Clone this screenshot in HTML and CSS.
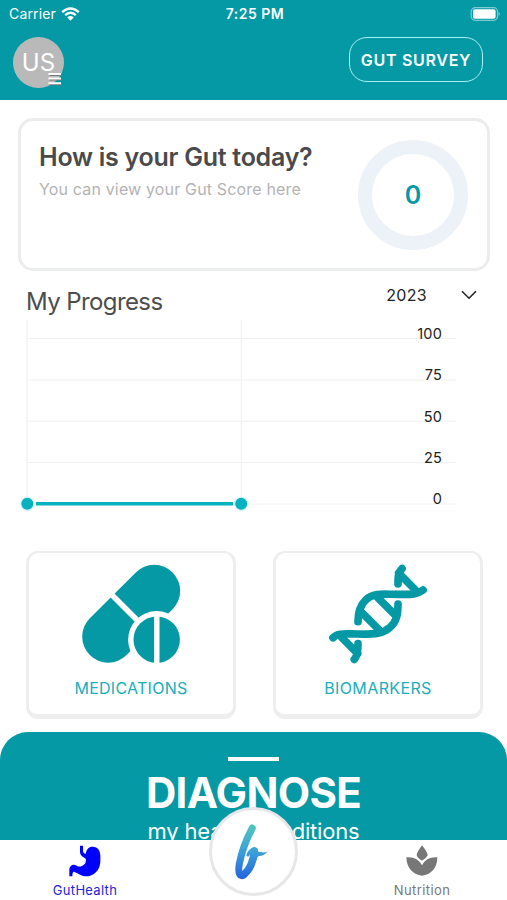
FILE: index.html
```html
<!DOCTYPE html>
<html lang="en">
<head>
<meta charset="utf-8">
<title>Gut Health</title>
<link rel="stylesheet" href="styles.css">
</head>
<body>
<div class="app">
  <header class="header">
    <div class="status">
      <div class="carrier"><span>Carrier</span>
        <svg width="19" height="14" viewBox="0 0 19 14" fill="none" stroke="#fff"><path d="M1.2 5.2Q9.5-2.2 17.8 5.2M4.2 8.2Q9.5 3.4 14.8 8.2" stroke-width="2.4"/><path d="M6.2 10.4Q9.5 7.6 12.8 10.4L9.5 13.8Z" fill="#fff" stroke="none"/></svg>
      </div>
      <div class="time">7:25 PM</div>
      <svg class="battery" width="31" height="14" viewBox="0 0 31 14"><rect x="1.2" y=".7" width="26.4" height="12.6" rx="4" fill="none" stroke="#7fcbd1" stroke-width="1.2"/><rect x="3" y="2.3" width="22.6" height="9.4" rx="2" fill="#fff"/><path d="M28.7 4.7Q31 7 28.7 9.3Z" fill="#7fcbd1"/></svg>
    </div>
    <div class="toolbar">
      <div class="avatar">US
        <svg class="menu" width="14" height="14" viewBox="0 0 14 14"><path d="M1.5 3H14M1.5 7.5H14M1.5 12.3H14" stroke="#777" stroke-width="2"/><path d="M.5 2H13M.5 6.5H13M.5 11.3H13" stroke="#fff" stroke-width="2"/></svg>
      </div>
      <button class="survey">GUT SURVEY</button>
    </div>
  </header>
  <main class="content">
    <section class="score">
      <div><h1>How is your Gut today?</h1><p>You can view your Gut Score here</p></div>
      <div class="ring">0</div>
    </section>
    <section class="progress">
      <div class="progress-head">
        <h2>My Progress</h2>
        <div class="year">2023<svg width="16" height="10" viewBox="0 0 16 10"><path d="M1 1.2 8 8.2 15 1.2" fill="none" stroke="#222" stroke-width="1.6"/></svg></div>
      </div>
      <svg class="chart" width="507" height="194" viewBox="0 320 507 194">
        <path d="M27 338.5H456M27 379.9H456M27 421.2H456M27 462.6H456M27 504H456" stroke="#f0f0f1"/>
        <path d="M27 320V504M241.4 320V504" stroke="#f1f1f2" stroke-width="1.3"/>
        <path d="M36 503.8H233" stroke="#06b2bf" stroke-width="3.4"/>
        <g fill="#06b2bf" stroke="#d9f6f8" stroke-width="1.2"><circle cx="27.3" cy="503.8" r="6.6"/><circle cx="241.2" cy="503.8" r="6.6"/></g>
        <g class="axis"><text x="442" y="339">100</text><text x="442" y="380.3">75</text><text x="442" y="421.6">50</text><text x="442" y="462.9">25</text><text x="442" y="504.2">0</text></g>
      </svg>
    </section>
    <section class="tiles">
      <div class="tile">
        <svg width="100" height="100" viewBox="81 564 100 100">
          <path d="M108.2 636.7 154.2 590.8" stroke="#0499a5" stroke-width="52" stroke-linecap="round"/>
          <path d="M110 593 139 622" stroke="#fff" stroke-width="5.4"/>
          <circle cx="156.7" cy="639.7" r="28.6" fill="#fff"/>
          <circle cx="156.7" cy="639.7" r="23.2" fill="#0499a5"/>
          <path d="M156.8 614V665" stroke="#fff" stroke-width="5.4"/>
        </svg><span class="medications">MEDICATIONS</span>
      </div>
      <div class="tile">
        <svg width="100" height="100" viewBox="202 71 300 300" fill="none" stroke="#0499a5" stroke-width="23" stroke-linecap="round" stroke-linejoin="round">
          <path d="M217 292C232 277 252 281 290 281C345 282 367 280 388 261C408 244 412 222 412 191"/>
          <path d="M292 244C292 216 298 195 315 179C337 157 361 162 412 162C448 162 468 164 487 149"/>
          <path d="M424 85C413 95 412 109 412 131M281 357C291 346 292 331 292 310"/>
          <path d="M414 98 466 151M240 288 291 340M350 171 404 225M304 217 358 271" stroke-width="23"/>
        </svg><span class="biomarkers">BIOMARKERS</span>
      </div>
    </section>
  </main>
  <section class="diagnose">
    <div class="handle"></div>
    <h2>DIAGNOSE</h2>
    <p>my health conditions</p>
  </section>
  <nav class="tabs">
    <div class="tab active">
      <svg width="32" height="32" viewBox="207 361 96 96"><path d="M240 363H249V379Q249 386 257 388C259 371 270 363 284 367C302 372 302 391 301 411C300 437 281 455 258 455C243 455 230 443 222 441Q217 440 217 455H208V435C208 424 219 416 230 423C240 430 257 423 258 407C259 396 240 399 240 381Z" fill="#00f"/></svg>
      <span>GutHealth</span>
    </div>
    <div class="logo">
      <svg width="110" height="105" viewBox="0 0 110 105">
        <defs><linearGradient id="ink" x1="0" y1="29" x2="0" y2="84" gradientUnits="userSpaceOnUse"><stop stop-color="#51c8bd"/><stop offset=".5" stop-color="#3aa0d8"/><stop offset="1" stop-color="#2664dc"/></linearGradient></defs>
        <g fill="none" stroke="url(#ink)" stroke-linecap="round" stroke-linejoin="round"><path d="M52.3 33C47.5 42 41.5 57 39.3 69C37.5 79.5 40.5 82 44 80" stroke-width="7"/><path d="M43.5 79.5C50 75 53.8 65 54.3 56" stroke-width="7.6"/><path d="M48 60C49 56.5 52.5 53.3 55 54.3" stroke-width="3"/></g>
        <path d="M54 52C58 53 56 57 60 57Q64 58 67.5 56.5Q64 61 59 61L56 63Z" fill="url(#ink)"/>
      </svg>
    </div>
    <div class="tab">
      <svg width="32" height="32" viewBox="457 362 96 96"><path d="M505 363C515 376 522 386 522 393Q519 401 505 409Q491 401 489 393C489 386 496 376 505 363ZM458 399C480 397 496 405 505 423C514 405 530 397 551 399C551 433 531 451 505 454C479 451 459 433 458 399Z" fill="#777"/></svg>
      <span class="nutrition">Nutrition</span>
    </div>
  </nav>
</div>
</body>
</html>
```
FILE: styles.css
```css
* { box-sizing: border-box; margin: 0; }
body { background: #fff; font-family: Inter, "Liberation Sans", sans-serif; }
.app { width: 507px; height: 900px; display: flex; flex-direction: column; overflow: hidden; }
.header { height: 100px; flex: none; background: #0499a5; color: #fff; }
.status { height: 27px; padding: 0 6px 0 9px; display: grid; grid-template-columns: 1fr auto 1fr; align-items: center; font-size: 14px; }
.carrier { display: flex; align-items: center; gap: 5px; letter-spacing: .15px; }
.time { font-weight: 600; letter-spacing: .5px; }
.battery { justify-self: end; }
.toolbar { display: flex; justify-content: space-between; align-items: flex-start; padding: 10px 24px 0 13px; }
.avatar { position: relative; width: 51px; height: 51px; border-radius: 50%; background: #b9b9b9; font-size: 24px; font-weight: 400; line-height: 51px; text-align: center; }
.menu { position: absolute; left: 35px; top: 35px; }
.survey { width: 134px; height: 45px; padding: 0; border: 1.5px solid #a8f0f4; border-radius: 18px; background: none; color: #fff; font: 600 16px Inter, sans-serif; letter-spacing: .7px; }
.content { height: 632px; flex: none; padding-top: 18px; }
.score { width: 472px; height: 153px; margin-left: 18px; padding: 19px 19px 0 18px; display: flex; justify-content: space-between; border: 3px solid #ebecec; border-radius: 15px; }
.score h1 { padding-top: 2px; font-size: 25px; line-height: 30px; font-weight: 600; letter-spacing: -.26px; color: #4a4a4a; white-space: nowrap; }
.score p { margin-top: 7px; font-size: 16px; line-height: 20px; letter-spacing: .16px; color: #b3b3b3; white-space: nowrap; }
.ring { width: 110px; height: 110px; border: 14px solid #edf2f8; border-radius: 50%; line-height: 82px; text-align: center; font-size: 25px; font-weight: 600; color: #0499a5; }
.progress-head { height: 49px; display: flex; justify-content: space-between; padding: 0 30px 0 26px; }
.progress h2 { padding-top: 16px; font-size: 24px; line-height: 30px; font-weight: 400; letter-spacing: -.6px; color: #4d4d4d; }
.year { display: flex; align-items: center; gap: 34px; height: 48px; font-size: 16px; letter-spacing: .3px; color: #222; }
.chart { display: block; }
.axis { font-size: 14.5px; letter-spacing: .2px; fill: #222; text-anchor: end; }
.tiles { display: flex; gap: 37px; padding: 37px 0 0 26px; }
.tile { width: 210px; height: 168px; padding-top: 11px; display: flex; flex-direction: column; align-items: center; border: 2px solid #eee; border-width: 2px 3px 5px; border-radius: 12px; color: #18aebb; font-size: 16px; }
.tile span { margin-top: 14px; line-height: 20px; }
.medications { letter-spacing: .27px; }
.biomarkers { letter-spacing: .38px; }
.diagnose { height: 108px; flex: none; background: #0499a5; border-radius: 28px 28px 0 0; padding-top: 25px; overflow: hidden; display: flex; flex-direction: column; align-items: center; color: #fff; white-space: nowrap; }
.handle { width: 51px; height: 4px; background: #fff; flex: none; }
.diagnose h2 { margin-top: 9px; font-size: 42px; line-height: 46px; font-weight: 650; letter-spacing: -.7px; }
.diagnose p { margin-top: 2px; font-size: 22px; line-height: 26px; letter-spacing: -.2px; }
.tabs { position: relative; height: 60px; flex: none; background: #fff; display: flex; justify-content: space-between; }
.tab { width: 170px; padding-top: 5px; display: flex; flex-direction: column; align-items: center; font-size: 13px; line-height: 18px; letter-spacing: .3px; color: #777; }
.tab span { margin-top: 4px; }
.nutrition { letter-spacing: .4px; }
.active { color: #2424d8; }
.logo { position: absolute; left: 209px; top: -33px; width: 89px; height: 89px; border: 3px solid #e7e7e9; border-radius: 50%; background: #fff; }
.logo svg { display: block; margin: -15px 0 0 -12px; }
```
